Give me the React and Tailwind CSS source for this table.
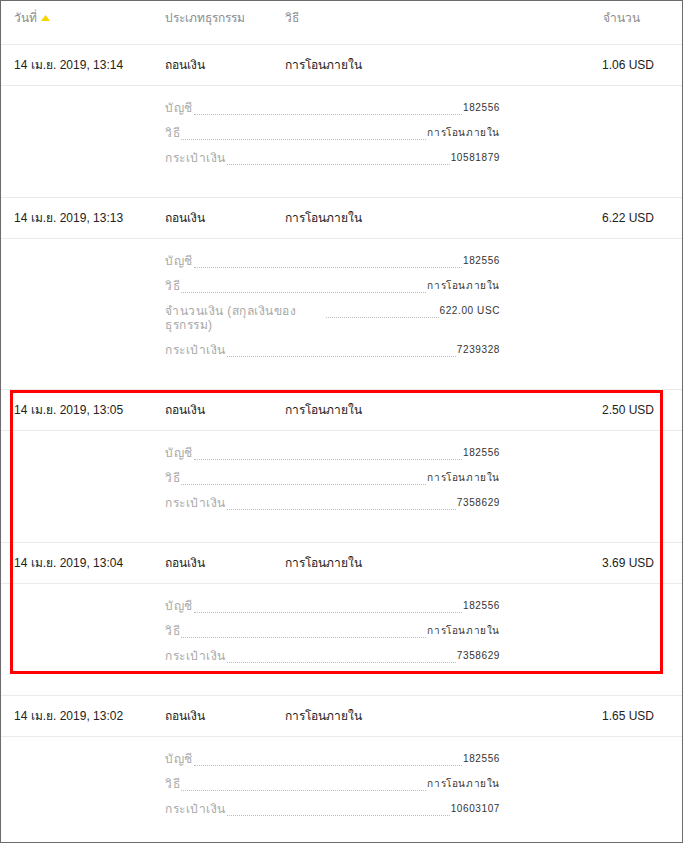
const ROWS = [
  {
    date: '14 เม.ย. 2019, 13:14',
    amount: '1.06 USD',
    details: [
      ['บัญชี', '182556'],
      ['วิธี', 'การโอนภายใน'],
      ['กระเป๋าเงิน', '10581879'],
    ],
  },
  {
    date: '14 เม.ย. 2019, 13:13',
    amount: '6.22 USD',
    details: [
      ['บัญชี', '182556'],
      ['วิธี', 'การโอนภายใน'],
      ['จำนวนเงิน (สกุลเงินของธุรกรรม)', '622.00 USC'],
      ['กระเป๋าเงิน', '7239328'],
    ],
  },
  {
    date: '14 เม.ย. 2019, 13:05',
    amount: '2.50 USD',
    details: [
      ['บัญชี', '182556'],
      ['วิธี', 'การโอนภายใน'],
      ['กระเป๋าเงิน', '7358629'],
    ],
  },
  {
    date: '14 เม.ย. 2019, 13:04',
    amount: '3.69 USD',
    details: [
      ['บัญชี', '182556'],
      ['วิธี', 'การโอนภายใน'],
      ['กระเป๋าเงิน', '7358629'],
    ],
  },
  {
    date: '14 เม.ย. 2019, 13:02',
    amount: '1.65 USD',
    details: [
      ['บัญชี', '182556'],
      ['วิธี', 'การโอนภายใน'],
      ['กระเป๋าเงิน', '10603107'],
    ],
  },
]

function DetailItem({ label, value }) {
  return (
    <div className="flex items-start">
      <span className="max-w-[160px] text-[12px] leading-[14px] tracking-[0.5px] text-[#a8a8a8]">{label}</span>
      <div className="flex-1 h-[14px] border-b border-dotted border-[#bdbdbd] mx-[1px]" />
      <span className="text-[10px] leading-[14px] tracking-[0.6px] text-[#333]">{value}</span>
    </div>
  )
}

function TxRow({ row }) {
  return (
    <div className="border-b border-[#ebebeb]">
      <div className="flex items-center h-[41px] border-b border-[#ebebeb] text-[12px] text-[#222]">
        <span className="w-[164px] pl-[13px]">{row.date}</span>
        <span className="w-[120px]">ถอนเงิน</span>
        <span className="flex-1">การโอนภายใน</span>
        <span className="pr-[28px]">{row.amount}</span>
      </div>
      <div className="ml-[164px] w-[335px] pt-[15px] pb-[32px] flex flex-col gap-[11px]">
        {row.details.map(([l, v], i) => (
          <DetailItem key={i} label={l} value={v} />
        ))}
      </div>
    </div>
  )
}

export default function App() {
  return (
    <div
      className="w-[683px] h-[843px] overflow-hidden border border-[#6b6b6b] bg-white"
      style={{ fontFamily: '"Liberation Sans", "Noto Sans", Arial, sans-serif' }}
    >
      <div className="flex h-[44px] pt-[9px] border-b border-[#ebebeb] text-[12px] leading-[16px] text-[#8c8c8c]">
        <span className="w-[164px] pl-[13px] flex items-start gap-[4px]">
          วันที่
          <svg width="9" height="6" viewBox="0 0 9 6" className="mt-[5px]">
            <polygon points="4.5,0 9,6 0,6" fill="#f7d400" />
          </svg>
        </span>
        <span className="w-[120px]">ประเภทธุรกรรม</span>
        <span className="flex-1">วิธี</span>
        <span className="pr-[42px]">จำนวน</span>
      </div>

      <TxRow row={ROWS[0]} />
      <TxRow row={ROWS[1]} />
      <div className="relative">
        <TxRow row={ROWS[2]} />
        <TxRow row={ROWS[3]} />
        <div className="absolute left-[9px] right-[19px] top-0 bottom-[22px] border-[3px] border-[#ff0000] pointer-events-none" />
      </div>
      <TxRow row={ROWS[4]} />
    </div>
  )
}
